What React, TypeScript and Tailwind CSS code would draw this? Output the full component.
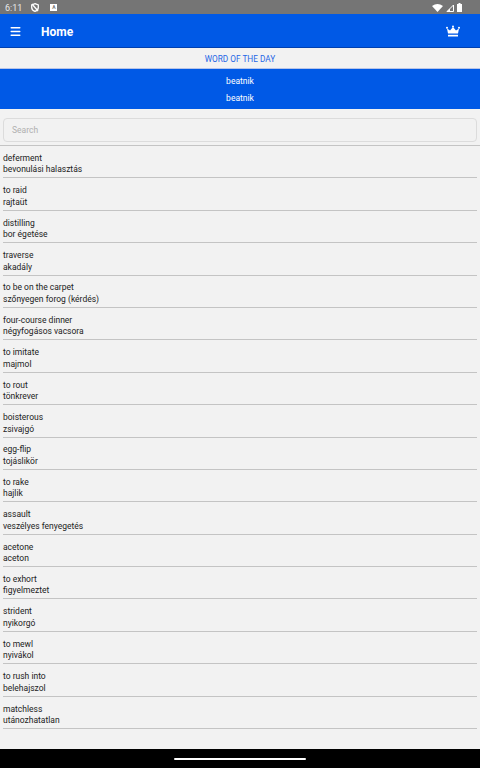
import { Menu } from 'lucide-react'

const WORDS = [
  ['deferment', 'bevonulási halasztás'],
  ['to raid', 'rajtaüt'],
  ['distilling', 'bor égetése'],
  ['traverse', 'akadály'],
  ['to be on the carpet', 'szőnyegen forog (kérdés)'],
  ['four-course dinner', 'négyfogásos vacsora'],
  ['to imitate', 'majmol'],
  ['to rout', 'tönkrever'],
  ['boisterous', 'zsivajgó'],
  ['egg-flip', 'tojáslikör'],
  ['to rake', 'hajlik'],
  ['assault', 'veszélyes fenyegetés'],
  ['acetone', 'aceton'],
  ['to exhort', 'figyelmeztet'],
  ['strident', 'nyikorgó'],
  ['to mewl', 'nyivákol'],
  ['to rush into', 'belehajszol'],
  ['matchless', 'utánozhatatlan'],
]

function StatusBar() {
  return (
    <div className="flex h-[14px] items-center justify-between bg-[#757575] pl-[5px] pr-[18px] pt-[1px] text-[9px] leading-none text-[#e8e8e8]">
      <div className="flex items-center gap-[9px]">
        <span className="mt-[1px]">6:11</span>
        <svg width="8" height="9" viewBox="0 0 8 9" fill="none" stroke="white" strokeWidth="1.3">
          <path d="M4 .7 L7.3 2 V4.5 C7.3 6.5 5.8 7.8 4 8.4 C2.2 7.8 .7 6.5 .7 4.5 V2 Z" />
          <path d="M1 1 L7 8" />
        </svg>
        <span className="ml-[2px] flex h-[7px] w-[7px] items-center justify-center bg-white text-[5px] font-bold text-[#757575]">A</span>
      </div>
      <div className="flex items-center gap-[3px]">
        <svg width="11" height="8" viewBox="0 0 11 8" fill="white">
          <path d="M0 2 Q5.5 -2 11 2 L5.5 8 Z" />
        </svg>
        <svg width="8" height="8" viewBox="0 0 8 8">
          <path d="M7.5 1 V7.5 H1 Z" fill="none" stroke="white" strokeWidth="1" />
          <path d="M4 4.5 V8 H0.5 Z" fill="white" />
        </svg>
        <svg width="5" height="9" viewBox="0 0 5 9" fill="white">
          <path d="M1.5 0 H3.5 V1 H5 V9 H0 V1 H1.5 Z" />
        </svg>
      </div>
    </div>
  )
}

function CrownIcon() {
  return (
    <svg width="14" height="13" viewBox="0 0 14 12" fill="white">
      <circle cx="1" cy="2.2" r="1" />
      <circle cx="7" cy="1" r="1" />
      <circle cx="13" cy="2.2" r="1" />
      <path d="M1 3 L4 5 L7 1.5 L10 5 L13 3 L12 8 H2 Z" />
      <rect x="2" y="9.3" width="10" height="1.7" />
    </svg>
  )
}

export default function App() {
  return (
    <div className="flex h-[768px] w-[480px] flex-col overflow-hidden bg-[#f2f2f2] font-['Roboto',sans-serif]">
      <StatusBar />

      <header className="flex h-[34px] items-center justify-between border-b border-[#0040b0] bg-[#0059e6] pl-[9px] pr-[20px] pt-[2px] text-white">
        <div className="flex items-center gap-[19px]">
          <Menu size={13} strokeWidth={2.5} />
          <span className="text-[12px] font-bold">Home</span>
        </div>
        <CrownIcon />
      </header>

      <div className="flex h-[20px] items-center justify-center pt-[3px] text-[8.25px] leading-none text-[#1f66e6]">WORD OF THE DAY</div>

      <div className="flex h-[41px] flex-col items-center justify-center gap-[6px] border-t border-[#b8c4e8] bg-[#0059e6] pt-[1px] text-[8.5px] leading-[11px] text-white">
        <span>beatnik</span>
        <span>beatnik</span>
      </div>

      <div className="border-b border-[#c4c4c4] px-[3px] pb-[3px] pt-[9px]">
        <div className="flex h-[24px] items-center rounded-[4px] border border-[#dcdcdc] pl-[8px] text-[8.5px] text-[#b0b0b0]">Search</div>
      </div>

      <div className="flex flex-col px-[3px]">
        {WORDS.map(([en, hu]) => (
          <div key={en} className="flex h-[32.4px] flex-col justify-end border-b border-[#c4c4c4] pb-[1.5px] text-[8.5px] leading-[11.5px] text-[#222222]">
            <span>{en}</span>
            <span>{hu}</span>
          </div>
        ))}
      </div>

      <div className="mt-auto flex h-[19px] items-center justify-center bg-black">
        <div className="h-[2px] w-[132px] rounded-full bg-white" />
      </div>
    </div>
  )
}
